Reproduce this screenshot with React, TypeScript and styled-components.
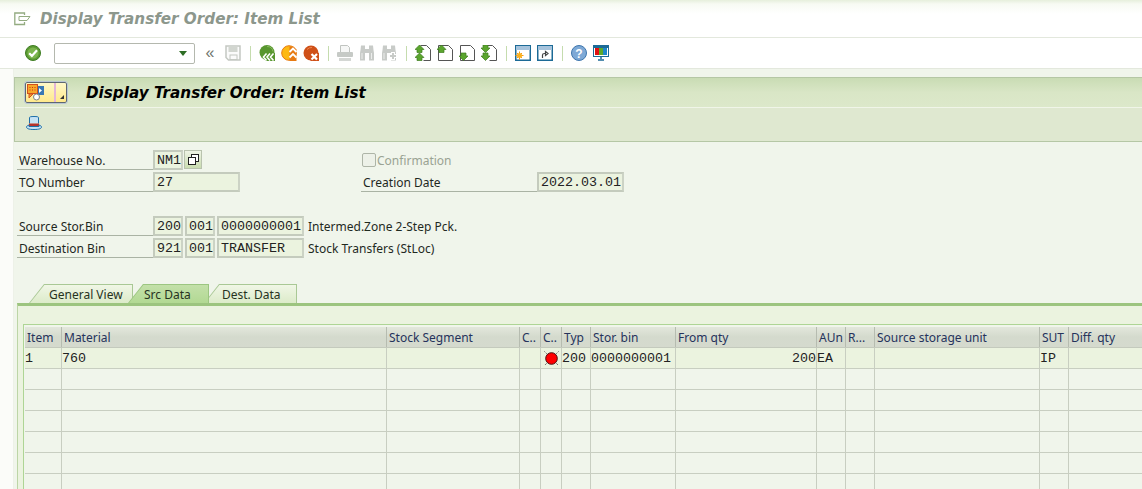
import React from "react";
import styled, { createGlobalStyle } from "styled-components";

const Global = createGlobalStyle`
  html, body { margin: 0; padding: 0; background: #f0f5eb; overflow: hidden; }
  body { font-family: "Noto Sans", "Liberation Sans", sans-serif; font-size: 12px; color: #1f2a1f; }
  * { box-sizing: border-box; }
`;

const Page = styled.div`width: 1142px; height: 489px; overflow: hidden; display: flex; flex-direction: column;`;
const TitleBar = styled.div`
  height: 38px; flex: none; display: flex; align-items: center; padding: 0 0 0 14px; gap: 8px;
  background: linear-gradient(#e6efdc 0, #f7faf3 4px, #fff 14px);
  border-bottom: 1px solid #e3e8dd;
`;
const TitleText = styled.span`
  font: italic 700 15.2px "DejaVu Sans", sans-serif; color: #8c978c;
`;
const Toolbar = styled.div`
  height: 31px; flex: none; display: flex; align-items: center; padding-left: 22px; background: #fff;
  border-bottom: 1px solid #e3e8dd;
`;
const Slot = styled.span`
  width: 22px; height: 22px; flex: none; display: flex; align-items: center; justify-content: center;
`;
const OkSlot = styled(Slot)`margin-right: 10px;`;
const Combo = styled.div`
  width: 141px; height: 21px; flex: none; border: 1px solid #b4b8ae; border-radius: 2px; background: #fff;
  display: flex; align-items: center; justify-content: flex-end; padding-right: 7px;
`;
const ComboArrow = styled.span`
  width: 0; height: 0; border-left: 4px solid transparent; border-right: 4px solid transparent; border-top: 5px solid #2d6d24;
`;
const Chevrons = styled.span`
  width: 27px; padding-left: 3px; text-align: center; flex: none; color: #70756c; font: 16px "Liberation Sans", sans-serif; line-height: 18px;
`;
const Sep = styled.span`
  width: 1px; height: 15px; flex: none; background: #c5dcae; margin: 0 5px 0 6px;
`;
const Body = styled.div`flex: 1; display: flex; min-height: 0;`;
const Strip = styled.div`width: 14px; flex: none; background: #fbfcf9; border-right: 1px solid #edf1e8;`;
const Main = styled.div`flex: 1; min-width: 0; padding-top: 8px; display: flex; flex-direction: column;`;
const Header = styled.div`
  height: 65px; flex: none; border: 1px solid #b5c7a5; border-right: 0; display: flex; flex-direction: column; background: #dfe8d0;
`;
const HeaderTop = styled.div`
  height: 30px; flex: none; display: flex; align-items: center; padding-left: 10px; gap: 19px;
  background: linear-gradient(#c9dcb4, #d9e6c6 50%, #dce8ca); border-bottom: 1px solid #f0f5e8;
`;
const MenuBtn = styled.div`
  width: 42px; height: 21px; display: flex; border: 1px solid #5e6870; border-radius: 2px; outline: 1px solid #b9c6d4;
  background: linear-gradient(#fff8c8, #ffe98c);
`;
const MenuIcon = styled.span`flex: 1; display: flex; align-items: center; padding-left: 1px;`;
const MenuDrop = styled.span`
  width: 12px; border-left: 2px solid #e3b6d8; position: relative;
  &::after { content: ""; position: absolute; right: 2px; bottom: 3px; border-left: 4px solid transparent; border-bottom: 4px solid #333; }
`;
const HeaderTitle = styled.span`font: italic 700 15.2px "DejaVu Sans", sans-serif; color: #000;`;
const HeaderTools = styled.div`flex: 1; display: flex; align-items: center; padding: 0 0 3px 11px;`;
const Content = styled.div`flex: 1; min-height: 0; padding: 8px 0 0 3px;`;
const FormGrid = styled.div`display: grid; grid-template-columns: 344px 1fr; grid-auto-rows: 22px; height: 119px;`;
const Row = styled.div`display: flex; align-items: flex-start; height: 22px;`;
const Label = styled.div<{ $w: number }>`
  width: ${(p) => p.$w}px; height: 20px; flex: none; border-bottom: 1px solid #aab3a4; line-height: 21px; padding-left: 2px; color: #1e281e; font-size: 12px;
`;
const Field = styled.div<{ $w: number }>`
  width: ${(p) => p.$w}px; height: 20px; flex: none; margin-right: 2px; border: 2px solid #c4cbbd; border-right-color: #ccd3c5;
  background: #ebf3df; font: 13.33px "Liberation Mono", monospace; color: #222; line-height: 17px; padding-left: 2px; white-space: pre;
`;
const MatchBtn = styled.span`
  width: 18px; height: 19px; flex: none; margin-left: -1px; border: 1px solid #b9c3ae; background: linear-gradient(#eef4e4, #c9dcb0); display: flex; align-items: center; justify-content: center;
`;
const Desc = styled.span`line-height: 21px; margin-left: 2px; white-space: nowrap;`;
const CheckRow = styled.div`display: flex; align-items: center; height: 20px; color: #9aa393;`;
const Check = styled.span`width: 14px; height: 14px; border: 1px solid #aeb5a7; border-radius: 2px; background: #edf1e8; margin: 0 1px 0 1px; flex: none;`;
const TabRow = styled.div`display: flex; height: 19px; margin-top: 15px; padding-left: 12px; position: relative; z-index: 1;`;
const Tab = styled.div<{ $w: number; $on?: boolean; $pad: number }>`
  width: ${(p) => p.$w}px; height: 19px; flex: none; position: relative; margin-right: -5px; z-index: ${(p) => (p.$on ? 2 : 1)};
  background: ${(p) => (p.$on ? "#9cc681" : "#a9c895")};
  clip-path: polygon(0 100%, 15px 0, 100% 0, 100% 100%);
  padding-left: ${(p) => p.$pad}px; line-height: 21px; color: #27331f; white-space: nowrap;
  &::before {
    content: ""; position: absolute; inset: 1px 1px 0 1px; z-index: -1;
    background: ${(p) => (p.$on ? "linear-gradient(#c3e0a9,#b2d993)" : "linear-gradient(#f0f6e6,#dcebc9)")};
    clip-path: polygon(0 100%, 14.4px 0, 100% 0, 100% 100%);
  }
`;
const Panel = styled.div`
  height: 200px; border-top: 3px solid #9cc47f; border-left: 1px solid #bcd5a6; background: #ebf3df; padding: 18px 0 0 5px;
`;
const Frame = styled.div`height: 180px; border: 1px solid #aed595; border-right: 0; border-bottom: 0; background: #f0f5eb; padding: 2px 0 0 1px; overflow: hidden;`;
const Cols = "37px 325px 133px 21px 21px 29px 85px 141px 29px 29px 165px 29px 100px";
const HeadRow = styled.div`
  display: grid; grid-template-columns: ${Cols}; height: 21px; background: linear-gradient(#e3e7dc, #d4dacd 50%, #d5dace); border-bottom: 1px solid #c4cabd;
`;
const HeadCell = styled.div`
  border-right: 1px solid #b6bcb0; padding-left: 2px; line-height: 22px; color: #26335c; white-space: nowrap; overflow: hidden; font-size: 12px;
`;
const DataRow = styled.div<{ $on?: boolean }>`
  display: grid; grid-template-columns: ${Cols}; height: 21px; border-bottom: 1px solid #c8cec1; background: ${(p) => (p.$on ? "#ebf3df" : "#f0f5eb")};
`;
const DataCell = styled.div<{ $right?: boolean }>`
  border-right: 1px solid #c8cec1; font: 13.33px "Liberation Mono", monospace; color: #222; line-height: 21px; white-space: pre; overflow: hidden;
  text-align: ${(p) => (p.$right ? "right" : "left")}; display: block;
`;
const LampCell = styled(DataCell)`display: flex; align-items: center; justify-content: center;`;

const S = ({ children, w = 16, h = 16 }: { children: React.ReactNode; w?: number; h?: number }) => (
  <svg width={w} height={h} viewBox={`0 0 ${w} ${h}`} fill="none">{children}</svg>
);
const Ok = () => (
  <S><circle cx="8" cy="8" r="7.5" fill="#5b9a32" stroke="#3e7d22" /><circle cx="8" cy="8" r="5.5" fill="#7cb54e" /><path d="M4.200 8.200l2.700 2.700L12 5.200" stroke="#fff" strokeWidth="2.200" /></S>
);
const Save = () => (
  <S><path d="M1 1h14v14H3.500L1 12.500z" stroke="#c4c8c2" fill="#fbfbfb" strokeWidth="1.500" /><rect x="3.500" y="1" width="9" height="6" fill="#d2d6d0" /><rect x="5" y="10" width="7" height="4.500" fill="#fbfbfb" stroke="#c4c8c2" /></S>
);
const Back = () => (
  <S>
    <circle cx="8" cy="7.500" r="7.500" fill="#58962f" />
    <path d="M8 1.500a6 6 0 0 1 6 5" stroke="#88bb5e" />
    <path d="M7 8l-3.500 4L7 16h9V8z" fill="#58962f" />
    <path d="M7.500 8.500L4.500 12l3 3.500M11 8.500L8 12l3 3.500M14.500 8.500L11.500 12l3 3.500" stroke="#fff" strokeWidth="1.600" />
  </S>
);
const Exit = () => (
  <S>
    <circle cx="8" cy="8" r="7.300" fill="#fdb913" stroke="#e77a12" />
    <path d="M8.500 1.500h4l3 3V16h-7z" fill="#e77a12" />
    <path d="M8.500 7l3.500-3.500L15.500 7M8.500 12.500L12 9l3.500 3.500" stroke="#fff" strokeWidth="1.900" />
  </S>
);
const Cancel = () => (
  <S>
    <circle cx="8" cy="8" r="7.500" fill="#cf5018" />
    <path d="M4 4.500a6 6 0 0 1 5-2" stroke="#ee8a4e" />
    <path d="M7.500 8h8.500v8H7.500z" fill="#cf5018" />
    <path d="M8.500 9l5.500 5.500M14 9l-5.500 5.500" stroke="#fff" strokeWidth="2.200" />
  </S>
);
const Print = () => (
  <S><path d="M3.500 .500h7l2 2v5h-9z" stroke="#c0c4c0" fill="#f6f7f6" /><rect x="0" y="7" width="16" height="5" rx="1" fill="#c6cac6" /><rect x="2" y="13" width="12" height="3" fill="#d4d7d4" /></S>
);
const Binoc = ({ plus }: { plus?: boolean }) => (
  <S>
    <path d="M1.500 5L2 .500h4v15H1V8zM14.500 5L14 .500h-4v15h5V8z" fill="#c8cbc8" /><rect x="6" y="4" width="4" height="4" fill="#c8cbc8" />
    <path d="M3 8v6M12.500 8v6" stroke="#ecedec" />
    {plus && <path d="M12 7v8M8 11h8" stroke="#fff" strokeWidth="4" />}
    {plus && <path d="M12 8v6M9 11h6" stroke="#c8cbc8" strokeWidth="2" />}
  </S>
);
const Doc = () => <path d="M5.500 .500h6l4 4v11h-7" stroke="#555" fill="#fff" />;
const FullDoc = () => <path d="M1.500 .500h10l4 4v11h-14z" stroke="#555" fill="#fff" />;
const UpA = ({ y }: { y: number }) => <path d={`M4.500 ${y}l4.500 4.500H7v3H2v-3H0z`} fill="#5ba52e" stroke="#3d7d1e" strokeWidth=".7" />;
const DnA = ({ y }: { y: number }) => <path d={`M4.500 ${y}l4.500-4.500H7v-3H2v3H0z`} fill="#5ba52e" stroke="#3d7d1e" strokeWidth=".7" />;
const First = () => <S><Doc /><UpA y={0} /><UpA y={8} /></S>;
const Prev = () => <S><FullDoc /><UpA y={0} /></S>;
const Next = () => <S><FullDoc /><DnA y={15.500} /></S>;
const Last = () => <S><Doc /><DnA y={7.500} /><DnA y={15.500} /></S>;
const Win = ({ sun }: { sun?: boolean }) => (
  <S>
    <rect x=".75" y=".75" width="14.500" height="14.500" fill="#fff" stroke="#1c6a96" strokeWidth="1.500" />
    <rect x="1" y="1" width="14" height="4" fill="#a6c3dc" />
    {sun ? (
      <g><path d="M4.500 6.500v8M.500 10.500h8M2 8l5 5M7 8l-5 5" stroke="#f59a16" /><circle cx="4.500" cy="10.500" r="2.500" fill="#fbb11e" /></g>
    ) : (
      <path d="M5.500 13V10c0-1 .5-1.500 2-1.500h1.500M8.500 6.500l2.500 2-2.500 2z" stroke="#444" strokeWidth="1.200" fill="none" />
    )}
  </S>
);
const Help = () => (
  <S><circle cx="8" cy="8" r="7.500" fill="#7ea9d6" stroke="#3e76ad" /><text x="8" y="12.500" textAnchor="middle" fontSize="12" fontWeight="700" fill="#fff" fontFamily="Liberation Sans">?</text></S>
);
const Monitor = () => (
  <S>
    <rect x=".5" y=".5" width="15" height="11" fill="#fff" stroke="#1c6a96" />
    <rect x="0" y="0" width="16" height="3" fill="#1c6a96" />
    <rect x="2" y="3" width="4" height="7" fill="#e01010" /><rect x="6" y="3" width="4" height="7" fill="#5ca92a" /><rect x="10" y="3" width="4" height="7" fill="#1e88c8" />
    <path d="M8 12v2M5 15h6" stroke="#1c6a96" strokeWidth="1.500" />
  </S>
);
const Hat = () => (
  <S h={14}>
    <path d="M3.500 7.500V1.500c0-.7 1.500-1 4.500-1s4.500.3 4.500 1v6" fill="#c5e2f5" stroke="#1f6fa8" />
    <rect x="3" y="7.500" width="10" height="2.500" fill="#b5322c" />
    <path d="M.500 11c0 1.500 2 2.500 7.500 2.500s7.500-1 7.500-2.500c0-.8-1-1.500-2.500-2v1.500H3V9c-1.500.5-2.500 1.200-2.500 2z" fill="#c5e2f5" stroke="#1f6fa8" />
  </S>
);
const Menu = () => (
  <S w={19} h={17}>
    <rect x="10" y="2" width="7" height="9" fill="#3b78b4" /><path d="M12 4l3 2.500L12 9z" fill="#fff" />
    <rect x=".5" y=".5" width="10" height="9" fill="#f8a829" stroke="#d2501e" />
    <path d="M2 10v4l4-4z" fill="#f8a829" stroke="#d2501e" />
    <path d="M2.500 3.500h1M5 3.500h1M7.500 3.500h1M2.500 6h1M5 6h1M7.500 6h1" stroke="#c8301a" />
    <circle cx="9.500" cy="13" r="3" fill="#fff" stroke="#7d8287" />
  </S>
);
const Copy = () => (
  <svg width="11" height="11" viewBox="0 0 11 11" fill="none"><rect x="3.500" y=".5" width="7" height="7" fill="#fff" stroke="#222" /><rect x=".5" y="3.500" width="7" height="7" fill="#fff" stroke="#222" /></svg>
);
const Lamp = () => (
  <svg width="15" height="15" viewBox="0 0 15 15" fill="none">
    <path d="M.5 .5l14 14M14.500 .5l-14 14" stroke="#444" strokeWidth="1" strokeDasharray="1 1" />
    <circle cx="7.500" cy="7.500" r="5.800" fill="#f00" stroke="#4a0c0c" />
  </svg>
);

const heads = ["Item", "Material", "Stock Segment", "C..", "C..", "Typ", "Stor. bin", "From qty", "AUn", "R...", "Source storage unit", "SUT", "Diff. qty"];
const empties = [0, 1, 2, 3, 4, 5];

export default function App() {
  return (
    <Page>
      <Global />
      <TitleBar>
        <svg width="18" height="14" viewBox="0 0 18 14" fill="none"><path d="M10.500 3V1H.8v11.500h9.700V10" stroke="#93ab80" strokeWidth="1.300" /><path d="M5 4.500h11l-3 4H5z" stroke="#93ab80" /></svg>
        <TitleText>Display Transfer Order: Item List</TitleText>
      </TitleBar>
      <Toolbar>
        <OkSlot><Ok /></OkSlot>
        <Combo><ComboArrow /></Combo>
        <Chevrons>«</Chevrons>
        <Slot><Save /></Slot>
        <Sep />
        <Slot><Back /></Slot>
        <Slot><Exit /></Slot>
        <Slot><Cancel /></Slot>
        <Sep />
        <Slot><Print /></Slot>
        <Slot><Binoc /></Slot>
        <Slot><Binoc plus /></Slot>
        <Sep />
        <Slot><First /></Slot>
        <Slot><Prev /></Slot>
        <Slot><Next /></Slot>
        <Slot><Last /></Slot>
        <Sep />
        <Slot><Win sun /></Slot>
        <Slot><Win /></Slot>
        <Sep />
        <Slot><Help /></Slot>
        <Slot><Monitor /></Slot>
      </Toolbar>
      <Body>
        <Strip />
        <Main>
          <Header>
            <HeaderTop>
              <MenuBtn><MenuIcon><Menu /></MenuIcon><MenuDrop /></MenuBtn>
              <HeaderTitle>Display Transfer Order: Item List</HeaderTitle>
            </HeaderTop>
            <HeaderTools><Hat /></HeaderTools>
          </Header>
          <Content>
            <FormGrid>
              <Row><Label $w={136}>Warehouse No.</Label><Field $w={30}>NM1</Field><MatchBtn><Copy /></MatchBtn></Row>
              <CheckRow><Check />Confirmation</CheckRow>
              <Row><Label $w={136}>TO Number</Label><Field $w={87}>27</Field></Row>
              <Row><Label $w={176}>Creation Date</Label><Field $w={87}>2022.03.01</Field></Row>
              <Row /><Row />
              <Row><Label $w={136}>Source Stor.Bin</Label><Field $w={30}>200</Field><Field $w={30}>001</Field><Field $w={87}>0000000001</Field><Desc>Intermed.Zone 2-Step Pck.</Desc></Row>
              <Row />
              <Row><Label $w={136}>Destination Bin</Label><Field $w={30}>921</Field><Field $w={30}>001</Field><Field $w={87}>TRANSFER</Field><Desc>Stock Transfers (StLoc)</Desc></Row>
              <Row />
            </FormGrid>
            <TabRow>
              <Tab $w={104} $pad={20}>General View</Tab>
              <Tab $on $w={81} $pad={16}>Src Data</Tab>
              <Tab $w={93} $pad={18}>Dest. Data</Tab>
            </TabRow>
            <Panel>
              <Frame>
                <HeadRow>{heads.map((h, i) => <HeadCell key={i}>{h}</HeadCell>)}</HeadRow>
                <DataRow $on>
                  <DataCell>1</DataCell><DataCell>760</DataCell><DataCell /><DataCell />
                  <LampCell><Lamp /></LampCell>
                  <DataCell>200</DataCell><DataCell>0000000001</DataCell><DataCell $right>200</DataCell>
                  <DataCell>EA</DataCell><DataCell /><DataCell /><DataCell>IP</DataCell><DataCell />
                </DataRow>
                {empties.map((r) => (
                  <DataRow key={r}>{heads.map((h, c) => <DataCell key={c} />)}</DataRow>
                ))}
              </Frame>
            </Panel>
          </Content>
        </Main>
      </Body>
    </Page>
  );
}
